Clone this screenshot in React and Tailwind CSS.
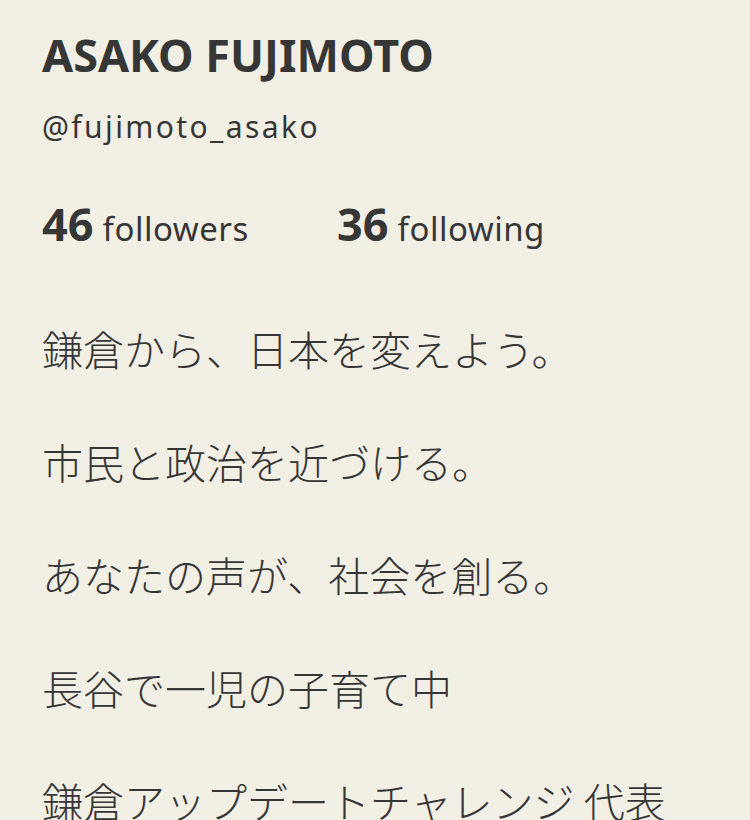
import React from 'react';

const lines = [
  '鎌倉から、日本を変えよう。',
  '市民と政治を近づける。',
  'あなたの声が、社会を創る。',
  '長谷で一児の子育て中',
  '鎌倉アップデートチャレンジ 代表',
];

export default function App() {
  return (
    <div className="w-[750px] h-[820px] overflow-hidden bg-[#f2efe5] text-[#363636] pl-[42px] font-['Noto_Sans','Noto_Sans_CJK_JP',sans-serif]">
      <h1 className="pt-[30px] text-[45px] leading-[50px] font-bold">ASAKO FUJIMOTO</h1>
      <p className="mt-[28px] text-[30px] leading-[38px] tracking-[2.4px]">@fujimoto_asako</p>

      <div className="mt-[56px] flex items-baseline text-[33px] leading-[44px] tracking-[0.5px]">
        <div className="w-[295px]">
          <span className="text-[45px] font-bold tracking-normal">46</span> followers
        </div>
        <div>
          <span className="text-[45px] font-bold tracking-normal">36</span> following
        </div>
      </div>

      <div className="mt-[72px] flex flex-col gap-[62px] font-['Noto_Sans_CJK_JP',sans-serif] font-light text-[41px] leading-[51px]">
        {lines.map((l) => (
          <p key={l}>{l}</p>
        ))}
      </div>
    </div>
  );
}
